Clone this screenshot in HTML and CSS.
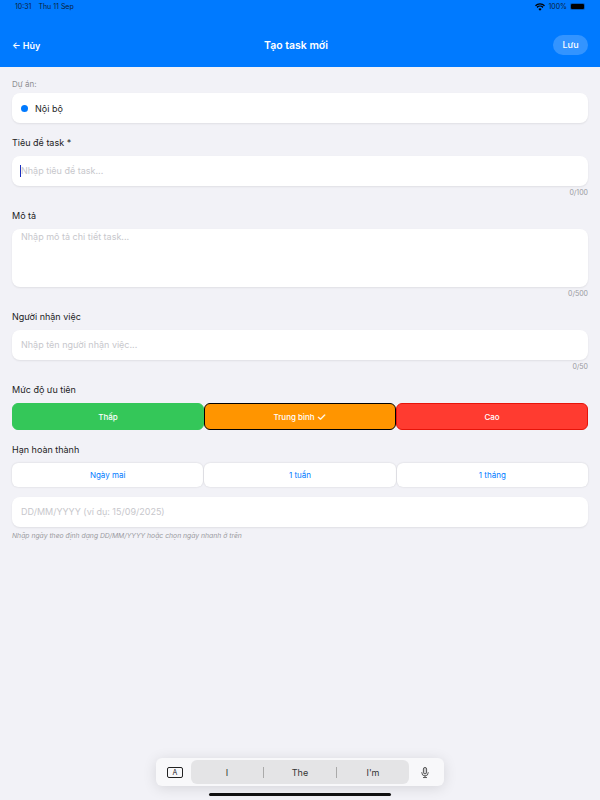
FILE: index.html
```html
<!DOCTYPE html>
<html lang="vi">
<head>
  <meta charset="UTF-8">
  <title>Tạo task mới</title>
  <link rel="stylesheet" href="styles.css">
</head>
<body>
<div class="app">
  <header class="header">
    <div class="status-bar">
      <div class="status-left"><span>10:31</span><span>Thu 11 Sep</span></div>
      <div class="status-right">
        <svg class="wifi" width="10" height="8" viewBox="0 0 20 15"><path d="M10 15l-3.2-3.6a4.6 4.6 0 0 1 6.4 0zM4.9 9.3L3 7.2a10 10 0 0 1 14 0l-1.900 2.100a7.200 7.200 0 0 0-10.200 0zM1.900 5.900L0 3.800a14.500 14.500 0 0 1 20 0l-1.900 2.100a11.700 11.700 0 0 0-16.200 0z"/></svg>
        <span>100%</span>
        <div class="battery"><div class="battery-fill"></div></div>
      </div>
    </div>
    <div class="nav-bar">
      <div class="nav-back">← Hủy</div>
      <div class="nav-title">Tạo task mới</div>
      <div class="nav-save">Lưu</div>
    </div>
  </header>

  <main class="form">
    <div class="project-label">Dự án:</div>
    <div class="field project">
      <span class="dot"></span>
      <span>Nội bộ</span>
    </div>

    <div class="label label-first">Tiêu đề task *</div>
    <div class="field placeholder"><span class="caret"></span>Nhập tiêu đề task...</div>
    <div class="counter">0/100</div>

    <div class="label">Mô tả</div>
    <div class="field textarea placeholder">Nhập mô tả chi tiết task...</div>
    <div class="counter">0/500</div>

    <div class="label">Người nhận việc</div>
    <div class="field placeholder">Nhập tên người nhận việc...</div>
    <div class="counter">0/50</div>

    <div class="label">Mức độ ưu tiên</div>
    <div class="priority-row">
      <div class="priority low">Thấp</div>
      <div class="priority medium">Trung bình <span class="check">✓</span></div>
      <div class="priority high">Cao</div>
    </div>

    <div class="label label-due">Hạn hoàn thành</div>
    <div class="quick-row">
      <div class="quick">Ngày mai</div>
      <div class="quick">1 tuần</div>
      <div class="quick">1 tháng</div>
    </div>
    <div class="field placeholder date">DD/MM/YYYY (ví dụ: 15/09/2025)</div>
    <div class="hint">Nhập ngày theo định dạng DD/MM/YYYY hoặc chọn ngày nhanh ở trên</div>
  </main>

  <div class="kb-bar">
    <div class="kb-a"><span>A</span></div>
    <div class="kb-words">
      <div class="kb-word">I</div>
      <div class="kb-word">The</div>
      <div class="kb-word">I'm</div>
    </div>
    <svg class="kb-mic" width="8" height="13" viewBox="0 0 10 14" fill="none" stroke="#333" stroke-width="1">
      <rect x="3" y="0.700" width="4" height="8" rx="2" fill="#333" fill-opacity="0.2"/>
      <path d="M1 6.500v0.700a4 4 0 0 0 8 0v-0.700M5 11.200v1.800M2.500 13.300h5"/>
    </svg>
  </div>
  <div class="home-indicator"></div>
</div>
</body>
</html>
```

FILE: styles.css
```css
html, body {
  margin: 0px;
  padding: 0px;
}
body {
  background-color: #f2f2f7;
  font-family: Inter, "Noto Sans", sans-serif;
  color: #1c1c1e;
}
.app {
  display: flex;
  flex-direction: column;
  height: 800px;
  overflow: hidden;
}

/* header */
.header {
  background-color: #007aff;
  height: 67px;
  padding: 0 12px;
  box-sizing: border-box;
}
.status-bar {
  display: flex;
  justify-content: space-between;
  align-items: center;
  height: 13px;
  font-size: 7px;
  color: #0b1f3a;
  padding: 0 3px;
}
.status-left {
  display: flex;
  gap: 7px;
}
.status-right {
  display: flex;
  align-items: center;
  gap: 3px;
}
.battery {
  width: 13px;
  height: 5px;
  padding: 1px;
  border-radius: 2px;
  background-color: rgba(0,0,0,0.25);
}
.battery-fill {
  width: 100%;
  height: 100%;
  border-radius: 1px;
  background-color: #000;
}
.nav-bar {
  display: flex;
  justify-content: space-between;
  align-items: center;
  margin-top: 22px;
  height: 20px;
  color: white;
}
.nav-back {
  font-size: 9px;
  font-weight: 600;
  width: 100px;
}
.nav-title {
  font-size: 10.500px;
  font-weight: 600;
}
.nav-save {
  width: 35px;
  height: 20px;
  line-height: 20px;
  margin-left: 73px;
  text-align: center;
  font-size: 9px;
  font-weight: 500;
  border-radius: 10px;
  background-color: rgba(255,255,255,0.2);
}

/* form */
.form {
  display: flex;
  flex-direction: column;
  padding: 12px 12px 0;
}
.project-label {
  font-size: 8px;
  line-height: 10px;
  color: #8e8e93;
  margin-bottom: 4px;
}
.label {
  font-size: 9px;
  line-height: 12px;
  font-weight: 400;
  margin-top: 13px;
  margin-bottom: 7px;
}
.label-first {
  margin-top: 14px;
}
.label-due {
  margin-top: 14px;
}
.field {
  display: flex;
  align-items: center;
  height: 30px;
  box-sizing: border-box;
  padding: 0 9px;
  background-color: white;
  border-radius: 8px;
  font-size: 9px;
  box-shadow: 0 1px 2px rgba(0,0,0,0.08);
}
.project {
  gap: 7px;
}
.dot {
  width: 7px;
  height: 7px;
  border-radius: 50%;
  background-color: #007aff;
}
.placeholder {
  color: #c7c7cc;
  padding-bottom: 1px;
}
.caret {
  width: 1px;
  height: 12px;
  margin-left: -1px;
  background-color: #1a2fc0;
}
.textarea {
  height: 58px;
  align-items: flex-start;
  padding-top: 2px;
}
.counter {
  font-size: 7px;
  line-height: 9px;
  color: #9a9aa0;
  text-align: right;
  margin-top: 2px;
}
.priority-row, .quick-row {
  display: flex;
}
.priority {
  flex: 1;
  height: 27px;
  line-height: 26px;
  box-sizing: border-box;
  text-align: center;
  font-size: 8px;
  font-weight: 500;
  color: white;
  border-radius: 6px;
  border: 1px solid transparent;
}
.check {
  font-size: 11px;
  line-height: 10px;
  vertical-align: -1px;
}
.low {
  background-color: #34c759;
  border-color: #34c759;
}
.medium {
  background-color: #ff9500;
  border-color: #000;
}
.high {
  background-color: #ff3b30;
  border-color: #e6140a;
}
.quick {
  flex: 1;
  height: 24px;
  line-height: 24px;
  margin-right: 1px;
  text-align: center;
  font-size: 8px;
  color: #007aff;
  background-color: white;
  border-radius: 6px;
  box-shadow: 0 0 2px rgba(0,0,0,0.15);
}
.quick:last-child {
  margin-right: 0;
}
.date {
  margin-top: 10px;
}
.hint {
  font-size: 6.800px;
  line-height: 9px;
  font-style: italic;
  color: #9a9aa0;
  margin-top: 4px;
}

/* keyboard shortcut bar */
.kb-bar {
  display: flex;
  align-items: center;
  align-self: center;
  box-sizing: border-box;
  width: 288px;
  height: 28px;
  margin-top: auto;
  padding: 2px 0 2px 11px;
  background-color: #f8f8fa;
  border-radius: 6px;
  box-shadow: 0 2px 14px rgba(0,0,0,0.12);
}
.kb-a {
  width: 16px;
  height: 11px;
  box-sizing: border-box;
  border: 1px solid #222;
  border-radius: 2px;
  font-size: 7px;
  line-height: 9px;
  text-align: center;
  margin-right: 8px;
}
.kb-words {
  display: flex;
  align-items: center;
  width: 218px;
  height: 24px;
  background-color: #e4e4e6;
  border-radius: 6px;
}
.kb-word {
  flex: 1;
  text-align: center;
  font-size: 9px;
  line-height: 11px;
  color: #333;
  border-left: 1px solid #aaa;
}
.kb-word:first-child {
  border-left: none;
}
.kb-mic {
  margin-left: 12px;
}
.home-indicator {
  align-self: center;
  width: 182px;
  height: 3px;
  margin-top: 7px;
  margin-bottom: 4px;
  border-radius: 2px;
  background-color: #111;
}
```
